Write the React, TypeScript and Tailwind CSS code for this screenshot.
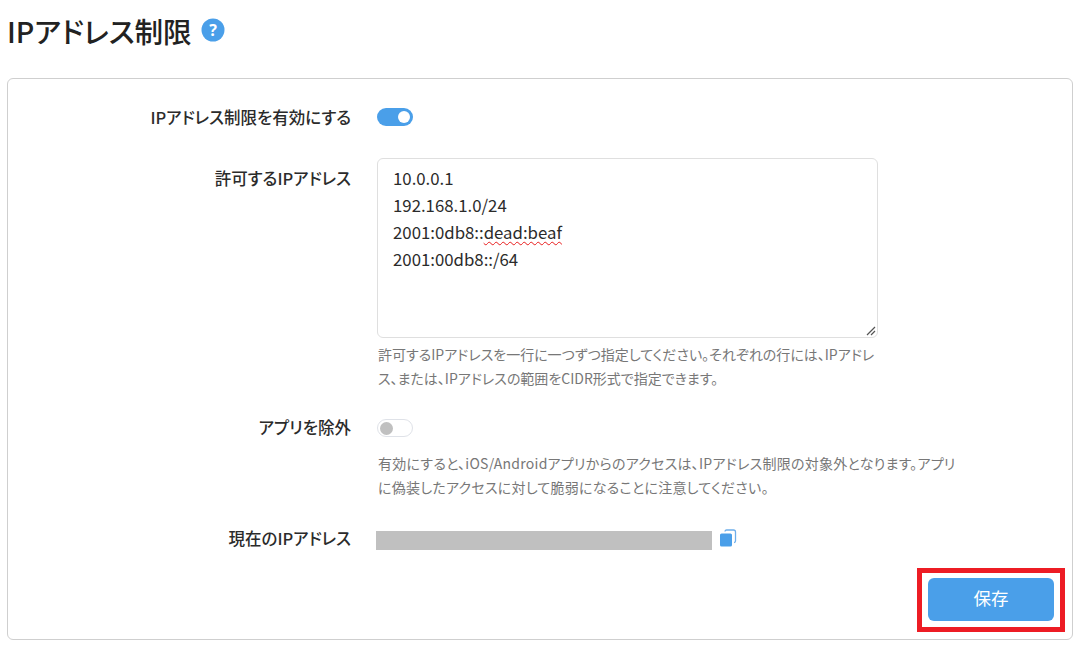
const labelClass = "w-[343px] shrink-0 text-right text-[16.5px] font-medium leading-[20px] text-[#2b2b2b]";
const helpClass = "text-[14px] leading-[24px] text-[#777777]";

function HelpIcon() {
  return (
    <svg viewBox="0 0 24 24" className="h-[24px] w-[24px]">
      <circle cx="12" cy="12" r="11.5" fill="#4a9fe9" />
      <text x="12" y="17.5" textAnchor="middle" fontSize="16" fontWeight="700" fill="#ffffff" fontFamily="Noto Sans">
        ?
      </text>
    </svg>
  );
}

function Toggle({ on }: { on: boolean }) {
  if (on) {
    return (
      <div className="flex h-[18px] w-[36px] items-center justify-end rounded-full bg-[#4a9fe9] pr-[3px]">
        <div className="h-[12px] w-[12px] rounded-full bg-white" />
      </div>
    );
  }
  return (
    <div className="flex h-[18px] w-[36px] items-center rounded-full border border-[#dfe2e8] bg-white pl-[2px]">
      <div className="h-[13px] w-[13px] rounded-full bg-[#c0c0c0]" />
    </div>
  );
}

function CopyIcon() {
  return (
    <svg viewBox="0 0 18 18" className="h-[18px] w-[18px]">
      <path d="M6 2.5 a1.5 1.5 0 0 1 1.5-1.5 h7 a2 2 0 0 1 2 2 v9 a1.5 1.5 0 0 1-1.5 1.5" fill="none" stroke="#6eaeea" strokeWidth="1.3" />
      <rect x="1" y="4.5" width="12" height="13" rx="1.6" fill="#4a9fe9" />
    </svg>
  );
}

export default function App() {
  return (
    <div className="relative h-[647px] w-[1083px] overflow-hidden bg-white font-['Noto_Sans_CJK_JP',sans-serif] [font-feature-settings:'palt']">
      <div className="flex h-[78px] items-start gap-[9px] pl-[7px] pt-[10px]">
        <h1 className="text-[28.6px] font-medium leading-[42px] text-[#222222]">IPアドレス制限</h1>
        <div className="pt-[8px]">
          <HelpIcon />
        </div>
      </div>

      <div className="ml-[7px] flex h-[562px] w-[1066px] flex-col rounded-[6px] border border-[#cfcfcf] pt-[29px]">
        <div className="flex h-[18px] items-center gap-[26px]">
          <div className={labelClass}>IPアドレス制限を有効にする</div>
          <Toggle on />
        </div>

        <div className="mt-[32px] flex gap-[26px]">
          <div className={`${labelClass} pt-[10px]`}>許可するIPアドレス</div>
          <div className="w-[501px]">
            <div className="relative h-[180px] rounded-[6px] border border-[#dfdfdf] pl-[15px] pt-[6px] text-[16.8px] leading-[27px] text-[#2b2b2b]">
              <div>10.0.0.1</div>
              <div>192.168.1.0/24</div>
              <div>
                2001:0db8::<span className="underline decoration-[#e81c1c] decoration-wavy decoration-1 underline-offset-2">dead:beaf</span>
              </div>
              <div>2001:00db8::/64</div>
              <svg viewBox="0 0 10 10" className="absolute bottom-[1px] right-[1px] h-[10px] w-[10px]">
                <path d="M1 9 9 1M5 9 9 5" stroke="#555555" strokeWidth="1.2" />
              </svg>
            </div>
            <p className={`${helpClass} mt-[4px] pl-[1px]`}>
              許可するIPアドレスを一行に一つずつ指定してください。それぞれの行には、IPアドレス、または、IPアドレスの範囲をCIDR形式で指定できます。
            </p>
          </div>
        </div>

        <div className="mt-[28px] flex gap-[26px]">
          <div className={`${labelClass} -mt-[1px]`}>アプリを除外</div>
          <div className="w-[580px] pt-[1px]">
            <Toggle on={false} />
            <p className={`${helpClass} mt-[14px] pl-[1px] tracking-[0.25px]`}>
              有効にすると、iOS/Androidアプリからのアクセスは、IPアドレス制限の対象外となります。アプリに偽装したアクセスに対して脆弱になることに注意してください。
            </p>
          </div>
        </div>

        <div className="mt-[29px] flex items-start gap-[25px]">
          <div className={labelClass}>現在のIPアドレス</div>
          <div className="mt-[3px] h-[19px] w-[336px] bg-[#c0c0c0]" />
          <div className="-ml-[18px] mt-[1px]">
            <CopyIcon />
          </div>
        </div>

        <div className="mt-[28px] flex justify-end pr-[18px]">
          <button className="h-[43px] w-[126px] rounded-[6px] bg-[#4a9fe9] pb-[3px] text-[17.5px] text-white">保存</button>
        </div>
      </div>

      {/* annotation frame from the screenshot */}
      <div className="absolute left-[917px] top-[568px] h-[64px] w-[148px] border-[5px] border-[#ed1c24]" />
    </div>
  );
}
